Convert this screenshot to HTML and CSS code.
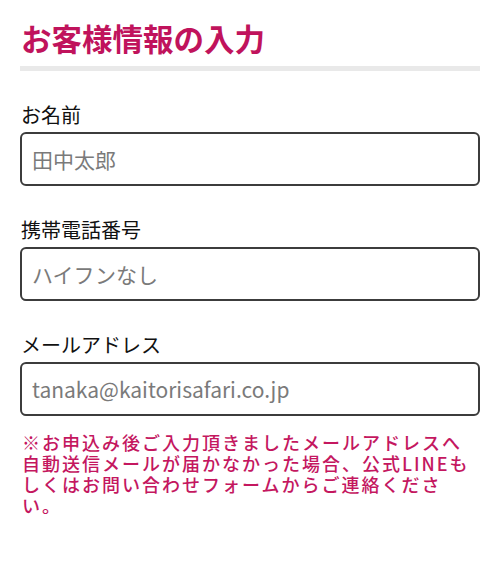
FILE: index.html
```html
<!DOCTYPE html>
<html lang="ja">
<head>
<meta charset="utf-8">
<title>お客様情報の入力</title>
<link rel="stylesheet" href="styles.css">
</head>
<body>
<main class="page">
  <h1 class="title">お客様情報の入力</h1>
  <div class="rule"></div>
  <form class="form">
    <div class="field">
      <label class="label" for="name">お名前</label>
      <input class="input" id="name" type="text" placeholder="田中太郎">
    </div>
    <div class="field">
      <label class="label" for="tel">携帯電話番号</label>
      <input class="input" id="tel" type="tel" placeholder="ハイフンなし">
    </div>
    <div class="field">
      <label class="label" for="mail">メールアドレス</label>
      <input class="input" id="mail" type="email" placeholder="tanaka@kaitorisafari.co.jp">
    </div>
    <p class="note">※お申込み後ご入力頂きましたメールアドレスへ自動送信メールが届かなかった場合、公式LINEもしくはお問い合わせフォームからご連絡ください。</p>
  </form>
</main>
</body>
</html>
```

FILE: styles.css
```css
html, body {
  margin: 0;
  padding: 0;
  background: #ffffff;
}

body {
  font-family: "Noto Sans CJK JP", "Noto Sans", sans-serif;
  color: #111111;
}

.page {
  padding: 0 20px;
}

.title {
  margin: 18px 0 0;
  font-size: 30.5px;
  line-height: 40px;
  font-weight: 700;
  color: #c0135c;
  padding-left: 1px;
}

.rule {
  margin-top: 8px;
  height: 5px;
  background: #e9e9e9;
}

.form {
  margin: 0;
}

.field {
  margin-top: 30px;
  display: flex;
  flex-direction: column;
}

.label {
  font-size: 20px;
  line-height: 28px;
  font-weight: 400;
  color: #111111;
  margin-bottom: 3px;
  padding-left: 1px;
}

.input {
  box-sizing: border-box;
  height: 54px;
  width: 100%;
  border: 2px solid #3c3c3c;
  border-radius: 6px;
  padding: 0 10px;
  font-family: "Noto Sans CJK JP", "Noto Sans", sans-serif;
  font-size: 21px;
  color: #111111;
  background: #ffffff;
  outline: none;
}

.input::placeholder {
  color: #7a7a7a;
}

.note {
  margin: 16px 0 0;
  padding-left: 2px;
  font-size: 18px;
  line-height: 21px;
  letter-spacing: 2px;
  font-weight: 500;
  color: #c4175f;
}
```
